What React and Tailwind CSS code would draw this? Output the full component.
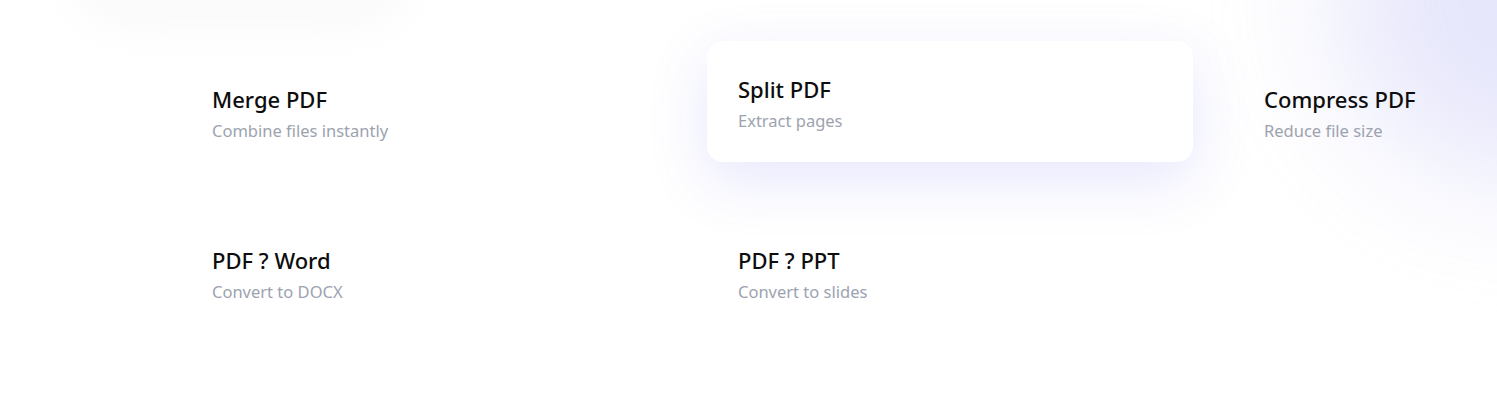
import React from "react";

const tools = [
  { title: "Merge PDF", desc: "Combine files instantly" },
  { title: "Split PDF", desc: "Extract pages", active: true },
  { title: "Compress PDF", desc: "Reduce file size" },
  { title: "PDF ? Word", desc: "Convert to DOCX" },
  { title: "PDF ? PPT", desc: "Convert to slides" },
];

const ToolCard = ({ title, desc, active }) => {
  return (
    <div
      className={`rounded-2xl px-[31px] pt-[33px] pb-[28px] transition ${
        active
          ? "-translate-y-[10px] bg-white shadow-[0_18px_60px_rgba(99,102,241,0.16)]"
          : "bg-transparent"
      }`}
    >
      <h3 className="text-[22px] leading-[30px] font-medium text-[#0d0d0d]">{title}</h3>
      <p className="mt-[3px] text-[16.5px] leading-[27px] text-[#9ca3af]">{desc}</p>
    </div>
  );
};

export default function App() {
  return (
    <div
      className="relative h-[417px] w-[1497px] overflow-hidden bg-white"
      style={{ fontFamily: '"Noto Sans", "Open Sans", sans-serif' }}
    >
      {/* soft decor blobs */}
      <div className="pointer-events-none absolute left-[70px] top-[-100px] h-[125px] w-[340px] rounded-full bg-[#f9f9f9] blur-xl" />
      <div className="pointer-events-none absolute right-[-200px] top-[-180px] h-[360px] w-[360px] rounded-full bg-[#dcdcfa] opacity-70 blur-3xl" />

      <div className="relative grid grid-cols-[486px_486px_486px] gap-x-[40px] gap-y-[40px] pl-[181px] pt-[51px]">
        {tools.map((t) => (
          <ToolCard key={t.title} {...t} />
        ))}
      </div>
    </div>
  );
}
